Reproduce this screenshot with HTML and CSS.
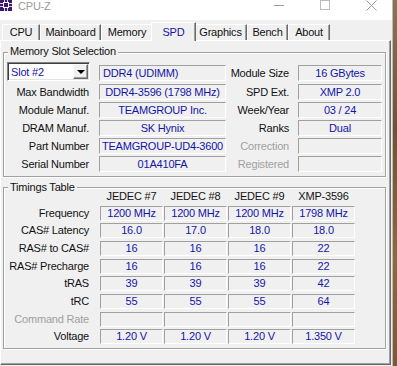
FILE: index.html
```html
<!DOCTYPE html>
<html>
<head>
  <meta charset="utf-8">
  <title>CPU-Z</title>
  <link rel="stylesheet" href="styles.css">
</head>
<body>
  <div class="screen">
    <div class="window">
      <div class="titlebar">
        <svg class="app-icon" width="12" height="11" viewBox="0 0 12 11">
          <rect width="12" height="11" fill="#3b1a6e"/>
          <rect x="3.5" y="2.5" width="5" height="5" fill="none" stroke="#fff"/>
          <path d="M0 3.5h3M0 6.5h3M9 3.5h3M9 6.5h3M4.5 8v3M7.5 8v3M4.5 0v2M7.5 0v2" stroke="#d9cfee"/>
        </svg>
        <span class="title">CPU-Z</span>
        <div class="controls">
          <span class="ctl"><svg width="10" height="10" viewBox="0 0 10 10"><path d="M0 5.5h10" stroke="#999"/></svg></span>
          <span class="ctl"><svg width="10" height="10" viewBox="0 0 10 10"><rect x="0.5" y="0.5" width="9" height="9" fill="none" stroke="#bbb"/></svg></span>
          <span class="ctl"><svg width="11" height="11" viewBox="0 0 11 11"><path d="M0.5 0.5l10 10M10.5 0.5l-10 10" stroke="#999"/></svg></span>
        </div>
      </div>

      <div class="tabs">
        <div class="tab">CPU</div>
        <div class="tab">Mainboard</div>
        <div class="tab">Memory</div>
        <div class="tab active">SPD</div>
        <div class="tab">Graphics</div>
        <div class="tab">Bench</div>
        <div class="tab">About</div>
      </div>

      <div class="panel">
        <div class="group slot-group">
          <div class="group-title">Memory Slot Selection</div>
          <div class="slot-grid">
            <div class="combo">
              <span class="combo-text">Slot #2</span>
              <span class="combo-btn"><span class="arrow"></span></span>
            </div>
            <div class="field left first">DDR4 (UDIMM)</div>
            <div class="label right first">Module Size</div>
            <div class="field first">16 GBytes</div>

            <div class="label">Max Bandwidth</div>
            <div class="field">DDR4-3596 (1798 MHz)</div>
            <div class="label right">SPD Ext.</div>
            <div class="field">XMP 2.0</div>

            <div class="label">Module Manuf.</div>
            <div class="field">TEAMGROUP Inc.</div>
            <div class="label right">Week/Year</div>
            <div class="field">03 / 24</div>

            <div class="label">DRAM Manuf.</div>
            <div class="field">SK Hynix</div>
            <div class="label right">Ranks</div>
            <div class="field">Dual</div>

            <div class="label">Part Number</div>
            <div class="field">TEAMGROUP-UD4-3600</div>
            <div class="label right off">Correction</div>
            <div class="field"></div>

            <div class="label">Serial Number</div>
            <div class="field">01A410FA</div>
            <div class="label right off">Registered</div>
            <div class="field"></div>
          </div>
        </div>

        <div class="group timings-group">
          <div class="group-title">Timings Table</div>
          <div class="timings-grid">
            <div></div>
            <div class="col-head">JEDEC #7</div>
            <div class="col-head">JEDEC #8</div>
            <div class="col-head">JEDEC #9</div>
            <div class="col-head">XMP-3596</div>

            <div class="label">Frequency</div>
            <div class="cell">1200 MHz</div>
            <div class="cell">1200 MHz</div>
            <div class="cell">1200 MHz</div>
            <div class="cell">1798 MHz</div>

            <div class="label">CAS# Latency</div>
            <div class="cell">16.0</div>
            <div class="cell">17.0</div>
            <div class="cell">18.0</div>
            <div class="cell">18.0</div>

            <div class="label">RAS# to CAS#</div>
            <div class="cell">16</div>
            <div class="cell">16</div>
            <div class="cell">16</div>
            <div class="cell">22</div>

            <div class="label">RAS# Precharge</div>
            <div class="cell">16</div>
            <div class="cell">16</div>
            <div class="cell">16</div>
            <div class="cell">22</div>

            <div class="label">tRAS</div>
            <div class="cell">39</div>
            <div class="cell">39</div>
            <div class="cell">39</div>
            <div class="cell">42</div>

            <div class="label">tRC</div>
            <div class="cell">55</div>
            <div class="cell">55</div>
            <div class="cell">55</div>
            <div class="cell">64</div>

            <div class="label off">Command Rate</div>
            <div class="cell"></div>
            <div class="cell"></div>
            <div class="cell"></div>
            <div class="cell"></div>

            <div class="label">Voltage</div>
            <div class="cell">1.20 V</div>
            <div class="cell">1.20 V</div>
            <div class="cell">1.20 V</div>
            <div class="cell">1.350 V</div>
          </div>
        </div>
      </div>
    </div>
    <div class="wall"></div>
  </div>
</body>
</html>
```

FILE: styles.css
```css
* {
  box-sizing: border-box;
}

body {
  margin: 0;
  font-family: "Liberation Sans", Arial, sans-serif;
  font-size: 11px;
  letter-spacing: -0.2px;
  color: #111;
  background: #f0f0f0;
}

.screen {
  display: flex;
  width: 397px;
  height: 366px;
  overflow: hidden;
}

.window {
  width: 393px;
  background: #f0f0f0;
  border-right: 1px solid #bcbcbc;
  display: flex;
  flex-direction: column;
}

.wall {
  flex: 1;
  background: linear-gradient(#8a7654, #6e5332 35%, #8d693d 70%, #7a5a34);
}

/* title bar */

.titlebar {
  height: 20px;
  flex: none;
  background: #fff;
  display: flex;
  align-items: flex-start;
}

.app-icon {
  display: block;
}

.title {
  margin-left: 6px;
  line-height: 12px;
  color: #9a9a9a;
}

.controls {
  margin-left: auto;
  margin-right: -2px;
  display: flex;
}

.ctl {
  width: 46px;
  display: flex;
  justify-content: center;
}

.ctl svg {
  display: block;
}

/* tabs */

.tabs {
  height: 20px;
  flex: none;
  padding-left: 2px;
  display: grid;
  grid-template-columns: 38px 61px 52px 41px 53px 41px 42px;
  align-items: end;
}

.tab {
  height: 16px;
  line-height: 15px;
  text-align: center;
  white-space: nowrap;
  border-top: 1px solid #fff;
  border-left: 1px solid #fff;
  border-right: 1px solid #696969;
  box-shadow: inset -1px 0 #a0a0a0;
}

.tab.active {
  position: relative;
  z-index: 1;
  height: 19px;
  line-height: 18px;
  margin: 0 -2px -1px;
  background: #f0f0f0;
  color: #1414aa;
}

/* panel */

.panel {
  height: 325px;
  flex: none;
  margin-right: 1px;
  padding: 11px 4px 0 2px;
  border: 1px solid;
  border-color: #fff #696969 #696969 #fff;
  box-shadow: inset -1px -1px 0 #a0a0a0;
}

.group {
  border: 1px solid #a0a0a0;
  box-shadow: 1px 1px 0 #fff, inset 1px 1px 0 #fff;
}

.group-title {
  width: max-content;
  margin-left: 4px;
  padding: 0 2px;
  line-height: 13px;
  background: #f0f0f0;
}

.slot-group {
  padding-bottom: 4px;
}

.slot-group .group-title {
  margin-top: -8px;
  margin-bottom: 4px;
}

.timings-group {
  margin-top: 10px;
  padding-bottom: 4px;
}

.timings-group .group-title {
  margin-top: -7px;
  margin-bottom: -4px;
}

/* rows */

.slot-grid {
  display: grid;
  grid-template-columns: 95px 127px 72px 84px;
  grid-template-rows: 20px;
  grid-auto-rows: 16px;
  row-gap: 2px;
}

.timings-grid {
  display: grid;
  grid-template-columns: 95px repeat(4, 63px);
  column-gap: 1px;
  grid-template-rows: 13px;
  grid-auto-rows: 15px;
  row-gap: 2.66px;
}

.label {
  text-align: right;
  padding-right: 10px;
  line-height: 16px;
  white-space: nowrap;
}

.label.right {
  padding-right: 9px;
}

.timings-grid .label {
  line-height: 15px;
}

.label.off {
  color: #a0a0a0;
}

.first {
  align-self: end;
  margin-bottom: 1px;
}

.field,
.cell {
  border: 1px solid;
  border-color: #a0a0a0 #fff #fff #a0a0a0;
  color: #1414aa;
  text-align: center;
  white-space: nowrap;
  overflow: hidden;
}

.field {
  height: 16px;
  line-height: 14px;
}

.field.left {
  text-align: left;
  padding-left: 3px;
}

.cell {
  height: 15px;
  line-height: 13px;
}

.col-head {
  text-align: center;
  line-height: 13px;
  white-space: nowrap;
}

/* slot combo */

.combo {
  height: 19px;
  margin: 0 9px 0 3px;
  display: flex;
  align-items: center;
  background: #fff;
  border: 1px solid;
  border-color: #828282 #fff #fff #828282;
  box-shadow: inset 1px 1px 0 #404040, inset -1px -1px 0 #e3e3e3;
  padding: 1px 1px 1px 3px;
}

.combo-text {
  flex: 1;
  color: #1414aa;
}

.combo-btn {
  width: 15px;
  height: 15px;
  display: flex;
  align-items: center;
  justify-content: center;
  background: #f0f0f0;
  border: 1px solid;
  border-color: #fff #696969 #696969 #fff;
  box-shadow: inset -1px -1px 0 #a0a0a0;
}

.arrow {
  width: 0;
  height: 0;
  border-left: 4px solid transparent;
  border-right: 4px solid transparent;
  border-top: 4px solid #000;
}
```
